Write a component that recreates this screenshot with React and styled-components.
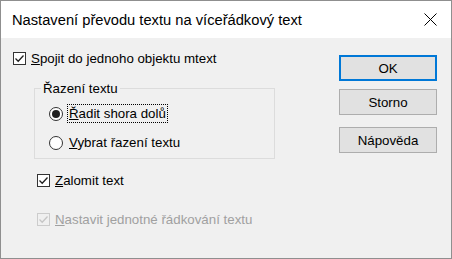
import React from "react";
import styled, { createGlobalStyle } from "styled-components";

const GlobalStyle = createGlobalStyle`
    html, body {
        margin: 0;
        padding: 0;
        background: #ffffff;
    }
`;

const Window = styled.div`
    width: 452px;
    height: 259px;
    box-sizing: border-box;
    border: 1px solid #8f8f8f;
    display: flex;
    flex-direction: column;
    font-family: "Liberation Sans", Arial, sans-serif;
    font-size: 13.3px;
    color: #000;
`;

const TitleBar = styled.div`
    height: 37px;
    flex-shrink: 0;
    background: #ffffff;
    display: flex;
    align-items: center;
    justify-content: space-between;
    padding: 0 14px 0 11px;
`;

const Title = styled.div`
    font-size: 14.7px;
    color: #000;
    padding-top: 1px;
`;

const Body = styled.div`
    flex: 1;
    background: #f0f0f0;
    display: flex;
`;

const LeftColumn = styled.div`
    flex: 1;
    display: flex;
    flex-direction: column;
    padding: 12px 0 0 12px;
`;

const CheckRow = styled.div`
    height: 17px;
    display: flex;
    align-items: center;
    gap: 5px;
    margin-left: ${(props) => props.$offset || 0}px;
    color: ${(props) => (props.$disabled ? "#a0a0a0" : "#000")};

    & + & {
        margin-top: 22px;
    }
`;

const Box = styled.div`
    width: 13px;
    height: 13px;
    box-sizing: border-box;
    border: 1px solid ${(props) => (props.$disabled ? "#cccccc" : "#333333")};
    background: ${(props) => (props.$disabled ? "#f0f0f0" : "#ffffff")};
    display: flex;
    align-items: center;
    justify-content: center;
`;

const Label = styled.span`
    white-space: nowrap;
    line-height: 17px;
`;

const GroupBox = styled.div`
    position: relative;
    width: 241px;
    height: 71px;
    box-sizing: border-box;
    margin: 21px 0 13px 21px;
    border: 1px solid #dcdcdc;
    padding: 16px 0 0 14px;
    display: flex;
    flex-direction: column;
    gap: 12px;
`;

const Legend = styled.span`
    position: absolute;
    top: -9px;
    left: 6px;
    padding: 0 2px;
    background: #f0f0f0;
    line-height: 17px;
`;

const RadioRow = styled.div`
    height: 17px;
    display: flex;
    align-items: center;
    gap: 4px;
`;

const Circle = styled.div`
    width: 14px;
    height: 14px;
    box-sizing: border-box;
    border-radius: 50%;
    border: 1px solid #333333;
    background: #ffffff;
    display: flex;
    align-items: center;
    justify-content: center;
`;

const Dot = styled.div`
    width: 8px;
    height: 8px;
    border-radius: 50%;
    background: #1f1f1f;
`;

const RadioLabel = styled.span`
    white-space: nowrap;
    line-height: 17px;
    padding: 0 1px;
    border: 1px dotted ${(props) => (props.$focused ? "#000" : "transparent")};
`;

const ButtonColumn = styled.div`
    width: 98px;
    margin-right: 14px;
    padding-top: 17px;
    display: flex;
    flex-direction: column;
    gap: 8px;
`;

const Button = styled.div`
    height: 26px;
    box-sizing: border-box;
    display: flex;
    align-items: center;
    justify-content: center;
    background: #e1e1e1;
    border: ${(props) => (props.$primary ? "2px solid #0078d7" : "1px solid #adadad")};
    margin-top: ${(props) => (props.$spaced ? 4 : 0)}px;
    white-space: nowrap;
`;

const CheckMark = ({ color }) => (
    <svg width="11" height="11" viewBox="0 0 11 11">
        <path d="M1.5 5.5 L4.2 8.2 L9.5 2.5" fill="none" stroke={color} strokeWidth="1.3" />
    </svg>
);

const CloseIcon = () => (
    <svg width="13" height="13" viewBox="0 0 13 13">
        <path d="M0.5 0.5 L12.5 12.5 M12.5 0.5 L0.5 12.5" stroke="#000" strokeWidth="1" />
    </svg>
);

const Checkbox = ({ label, mnemonic, disabled, offset }) => (
    <CheckRow $offset={offset} $disabled={disabled}>
        <Box $disabled={disabled}>
            <CheckMark color={disabled ? "#c6c6c6" : "#1f1f1f"} />
        </Box>
        <Label>
            <u>{mnemonic}</u>
            {label}
        </Label>
    </CheckRow>
);

const Radio = ({ label, mnemonic, checked, focused }) => (
    <RadioRow>
        <Circle>{checked ? <Dot /> : null}</Circle>
        <RadioLabel $focused={focused}>
            <u>{mnemonic}</u>
            {label}
        </RadioLabel>
    </RadioRow>
);

const App = () => {
    return (
        <>
            <GlobalStyle />
            <Window>
                <TitleBar>
                    <Title>Nastavení převodu textu na víceřádkový text</Title>
                    <CloseIcon />
                </TitleBar>
                <Body>
                    <LeftColumn>
                        <Checkbox mnemonic="S" label="pojit do jednoho objektu mtext" />
                        <GroupBox>
                            <Legend>Řazení textu</Legend>
                            <Radio mnemonic="Ř" label="adit shora dolů" checked focused />
                            <Radio mnemonic="V" label="ybrat řazení textu" />
                        </GroupBox>
                        <Checkbox mnemonic="Z" label="alomit text" offset={24} />
                        <Checkbox mnemonic="N" label="astavit jednotné řádkování textu" offset={24} disabled />
                    </LeftColumn>
                    <ButtonColumn>
                        <Button $primary>OK</Button>
                        <Button>Storno</Button>
                        <Button $spaced>Nápověda</Button>
                    </ButtonColumn>
                </Body>
            </Window>
        </>
    );
};

export default App;
